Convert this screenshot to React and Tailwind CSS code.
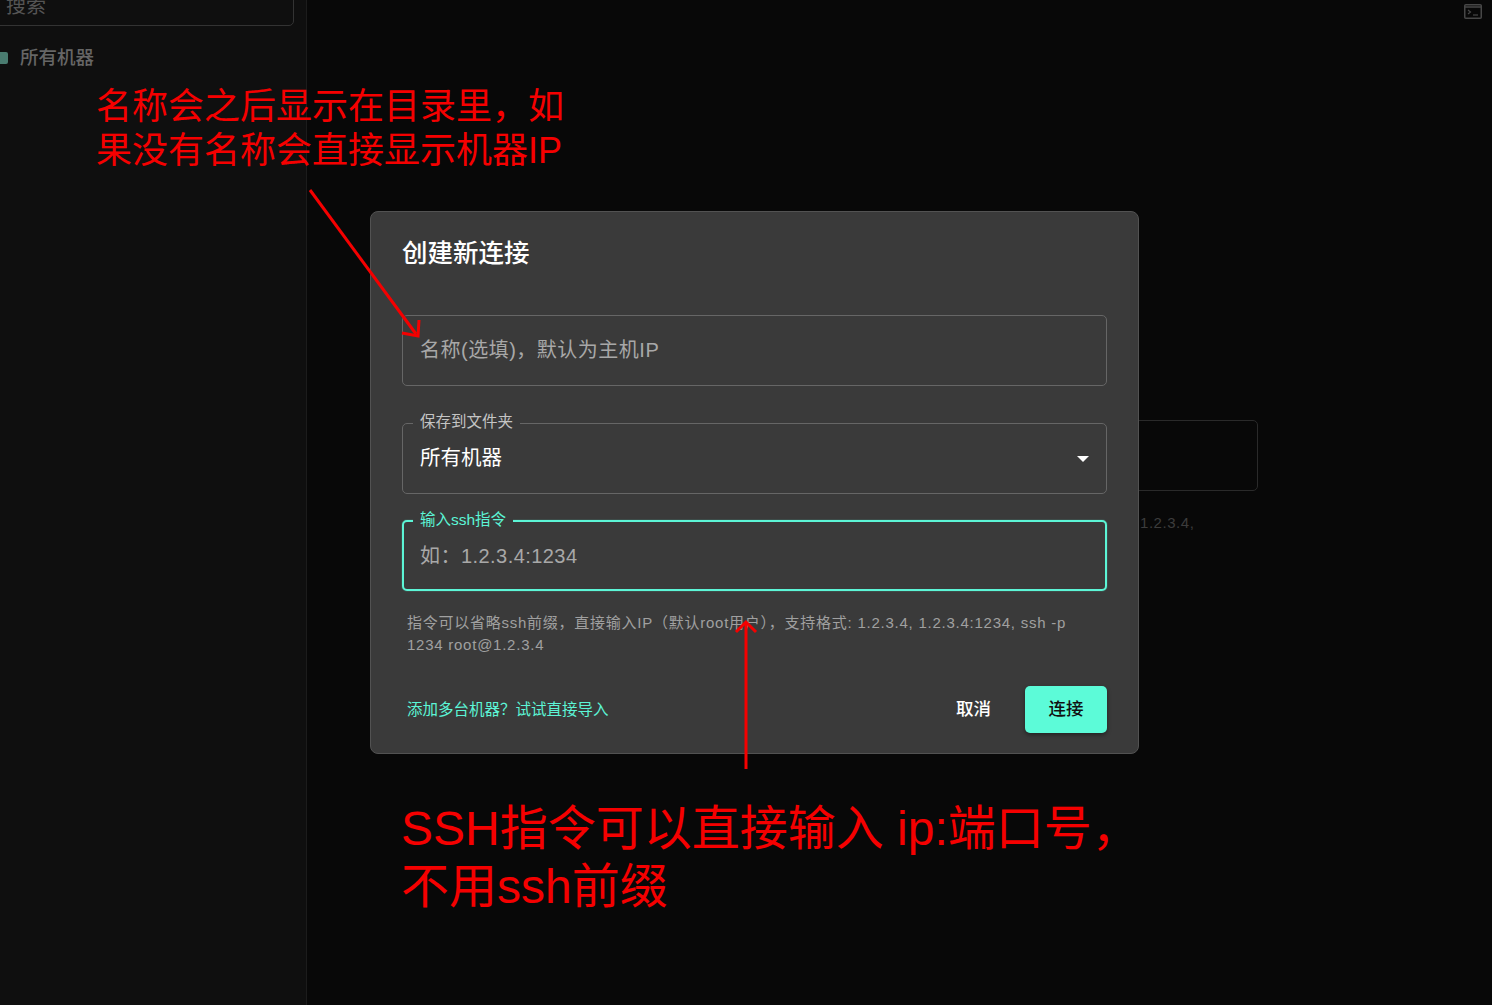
const font = "font-['Liberation_Sans','Noto_Sans_CJK_SC',sans-serif]";

function Field({ label, focused, children }) {
  return (
    <div
      className={
        focused
          ? "relative flex h-[71px] items-center rounded-[5px] border-2 border-[#5cf5d6] px-[16px] shadow-[0_0_1px_#5cf5d6]"
          : "relative flex h-[71px] items-center rounded-[5px] border border-[#666666] px-[17px]"
      }
    >
      {label && (
        <span
          className={
            focused
              ? "absolute left-[9px] top-[-12px] bg-[#3a3a3a] px-[7px] text-[15.5px] leading-[20px] text-[#5cf5d6]"
              : "absolute left-[10px] top-[-12px] bg-[#3a3a3a] px-[7px] text-[15.5px] leading-[20px] text-[#c4c4c4]"
          }
        >
          {label}
        </span>
      )}
      {children}
    </div>
  );
}

function Dialog() {
  return (
    <div className="absolute left-[370px] top-[211px] flex h-[543px] w-[769px] flex-col rounded-[8px] border border-[#525252] bg-[#3a3a3a] px-[31px]">
      <h2 className="mt-[24px] text-[25.5px] font-medium leading-[34px] text-white">创建新连接</h2>
      <div className="mt-[45px]">
        <Field>
          <span className="mt-[-2px] text-[20px] tracking-[0.5px] text-[#a8a8a8]">名称(选填)，默认为主机IP</span>
        </Field>
      </div>
      <div className="mt-[37px]">
        <Field label="保存到文件夹">
          <span className="text-[20.5px] text-white">所有机器</span>
          <span className="ml-auto h-0 w-0 border-x-[6.5px] border-t-[6.5px] border-x-transparent border-t-white" />
        </Field>
      </div>
      <div className="mt-[26px]">
        <Field label="输入ssh指令" focused>
          <span className="text-[20px] tracking-[0.45px] text-[#a8a8a8]">如：1.2.3.4:1234</span>
        </Field>
      </div>
      <p className="mt-[21px] px-[5px] text-[15px] leading-[22px] tracking-[0.75px] text-[#a0a0a0]">
        指令可以省略ssh前缀，直接输入IP（默认root用户），支持格式: 1.2.3.4, 1.2.3.4:1234, ssh -p 1234 root@1.2.3.4
      </p>
      <div className="mt-[30px] flex items-center pl-[5px]">
        <span className="text-[15.5px] text-[#5cf5d6]">添加多台机器？试试直接导入</span>
        <span className="ml-auto text-[17.5px] font-medium text-white">取消</span>
        <button className="ml-[34px] h-[47px] w-[82px] rounded-[5px] bg-[#5cfbd8] text-[17.5px] font-medium text-[#111111] shadow-[0_2px_4px_rgba(0,0,0,0.4)]">
          连接
        </button>
      </div>
    </div>
  );
}

function Annotations() {
  return (
    <>
      <p className="absolute left-[96px] top-[85px] w-[480px] text-[36px] leading-[44px] text-[#f50000]">
        名称会之后显示在目录里，如果没有名称会直接显示机器IP
      </p>
      <p className="absolute left-[401px] top-[800px] w-[745px] text-[48px] leading-[58px] text-[#f50000]">
        SSH指令可以直接输入 ip:端口号，不用ssh前缀
      </p>
      <svg className="absolute left-0 top-0" width="1492" height="1005" fill="none" stroke="#f50000" strokeWidth="3">
        <path d="M310 190L416 334" />
        <path d="M402 333L418 336L419 320" />
        <path d="M746 769V622" />
        <path d="M736 632L746 622L756 632" />
      </svg>
    </>
  );
}

export default function App() {
  return (
    <div className={`${font} relative flex h-[1005px] w-[1492px] overflow-hidden bg-[#080808]`}>
      <aside className="h-full w-[307px] shrink-0 border-r border-[#1c1c1c] bg-[#0f0f0f]">
        <div className="ml-[-12px] mt-[-15px] flex h-[41px] w-[306px] items-center rounded-[5px] border border-[#333333] pl-[17px] text-[20px] text-[#555555]">
          搜索
        </div>
        <div className="mt-[20px] flex items-center">
          <span className="h-[12px] w-[8px] rounded-r-[2px] bg-[#4a7c70]" />
          <span className="ml-[12px] text-[18.5px] font-medium leading-[24px] text-[#666666]">所有机器</span>
        </div>
      </aside>
      <main className="flex-1">
        <div className="flex justify-end pr-[10px] pt-[4px]">
          <svg width="18" height="15" viewBox="0 0 18 15" fill="none" stroke="#474747">
            <rect x="0.75" y="0.75" width="16.5" height="13.5" rx="1" strokeWidth="1.5" />
            <path d="M1 3H17" strokeWidth="1.5" />
            <path d="M4 6L6.5 8L4 10" strokeWidth="1.2" />
            <path d="M9 11H14" strokeWidth="1.2" />
          </svg>
        </div>
        <div className="ml-[234px] mt-[401px] h-[71px] w-[717px] rounded-[5px] border border-[#2a2a2a]" />
        <p className="ml-[833px] mt-[22px] text-[15px] leading-[20px] tracking-[0.55px] text-[#3c3c3c]">1.2.3.4,</p>
      </main>
      <Dialog />
      <Annotations />
    </div>
  );
}
